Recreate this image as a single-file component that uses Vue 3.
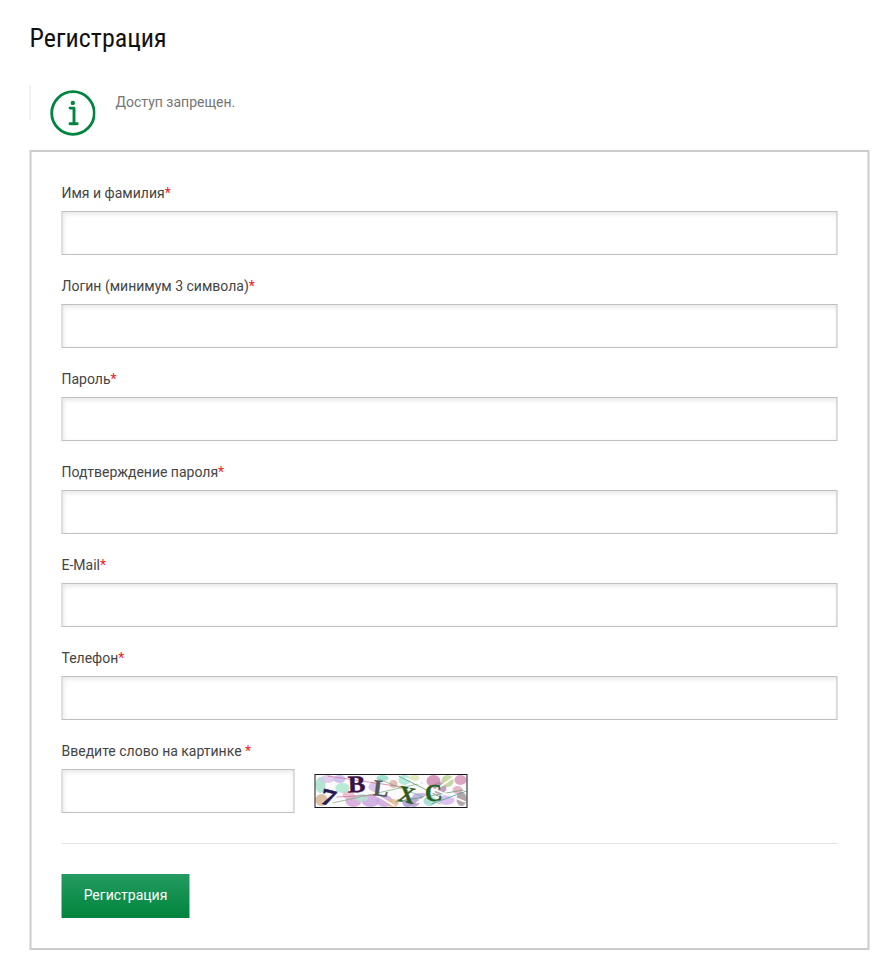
<script setup>
const fields = [
  { id: 'name', label: 'Имя и фамилия', type: 'text' },
  { id: 'login', label: 'Логин (минимум 3 символа)', type: 'text' },
  { id: 'password', label: 'Пароль', type: 'password' },
  { id: 'confirm', label: 'Подтверждение пароля', type: 'password' },
  { id: 'email', label: 'E-Mail', type: 'text' },
  { id: 'phone', label: 'Телефон', type: 'text' }
]

const blobs = [
  [6, 11, 5, 8, '#a4dfcd'], [13, 5, 7, 4, '#d8c4e8'], [7, 26, 6, 6, '#d6b38e'],
  [25, 5, 6, 4, '#c5b4ec'], [28, 14, 7, 5, '#a8e6cd'], [39, 27, 8, 6, '#d4a1d8'],
  [56, 27, 9, 6, '#c8a2df'], [70, 27, 8, 6, '#cba5dc'], [60, 13, 6, 5, '#d7b8e7'],
  [68, 4, 6, 3, '#8cdcc5'], [79, 10, 4, 4, '#dcb4a5'], [78, 29, 6, 4, '#e4b48e'],
  [90, 6, 6, 5, '#a5e6d6'], [99, 28, 6, 5, '#ad9bc8'], [106, 22, 8, 3, '#b8aaeb'],
  [119, 7, 7, 6, '#cd86ab'], [125, 14, 7, 6, '#b48cad'], [115, 27, 6, 5, '#98dcce'],
  [143, 16, 5, 4, '#e1a8bd'], [133, 7, 6, 6, '#b9cf8c'], [146, 6, 6, 5, '#d493b2'],
  [147, 25, 5, 7, '#a2929a'], [132, 26, 8, 5, '#d4b4ec'], [47, 24, 7, 4, '#b4dfcf'],
  [34, 21, 6, 4, '#e5b8c7'], [100, 4, 5, 3, '#d9e5ad'], [93, 29, 5, 4, '#a497d5']
]
</script>

<template>
  <main class="page">
    <h1>Регистрация</h1>
    <div class="notice">
      <svg class="info" width="46" height="46" viewBox="0 0 46 46">
        <circle cx="23.5" cy="23" r="21.3" fill="none" stroke="#008540" stroke-width="2.8" />
        <circle cx="23.3" cy="12.9" r="2.2" fill="#008540" />
        <path d="M20.5 18.1H24.5v15.6M20.5 33.8h7.2" fill="none" stroke="#008540" stroke-width="2.9" stroke-linecap="round" stroke-linejoin="round" />
      </svg>
      <p>Доступ запрещен.</p>
    </div>
    <form class="form" @submit.prevent>
      <div v-for="f in fields" :key="f.id" class="field">
        <label :for="f.id">{{ f.label }}<b>*</b></label>
        <input :id="f.id" :type="f.type">
      </div>
      <div class="field">
        <label for="captcha">Введите слово на картинке <b>*</b></label>
        <div class="captcha">
          <input id="captcha" type="text">
          <svg width="153" height="34" viewBox="0 0 153 34">
            <rect width="153" height="34" fill="#fbf9fc" />
            <ellipse v-for="(b, i) in blobs" :key="i" :cx="b[0]" :cy="b[1]" :rx="b[2]" :ry="b[3]" :fill="b[4]" opacity=".82" />
            <g fill="none">
              <path d="M13 2L88 13M22 23L64 21" stroke="#d66c9c" stroke-width=".7" />
              <path d="M18 29L108 9M64 5L126 30" stroke="#78a878" stroke-width=".7" />
              <path d="M84 2L128 24M81 28L149 16" stroke="#599563" stroke-width=".7" />
              <path d="M39 7L80 32M91 4L151 28M102 29L141 2" stroke="#fff" stroke-width="1.6" />
              <path d="M117 30L152 17" stroke="#4e9f9a" stroke-width=".8" />
            </g>
            <g class="glyphs">
              <text transform="translate(4.5 29) rotate(14) scale(1.35 1)" font-size="23" fill="#241a55" stroke="#241a55">7</text>
              <text transform="translate(33.5 18.5) rotate(-2) scale(1.1 1)" font-size="24" fill="#3a1146" stroke="#3a1146">B</text>
              <text transform="translate(58 21) rotate(7)" font-size="23" fill="#4e5a5c" stroke="#4e5a5c">L</text>
              <text transform="translate(82.5 26.5) rotate(12)" font-size="23" fill="#2c5a18" stroke="#2c5a18">X</text>
              <text transform="translate(111 27.5) rotate(-4)" font-size="24" fill="#246021" stroke="#246021">C</text>
            </g>
            <rect x=".5" y=".5" width="152" height="33" fill="none" stroke="#181818" />
          </svg>
        </div>
      </div>
      <div class="actions">
        <button type="submit">Регистрация</button>
      </div>
    </form>
  </main>
</template>

<style>
body {
  margin: 0;
  background: #fff;
}
</style>

<style scoped>
.page {
  width: 840px;
  padding: 20px 0 26px 30px;
  transform: translateX(-.5px);
  font: 14px/20px Roboto, "Liberation Sans", sans-serif;
  color: #444;
}
h1 {
  width: max-content;
  height: 35px;
  margin: 0;
  padding-top: 1px;
  font: 400 26px/35px "Roboto Condensed", Roboto, sans-serif;
  font-stretch: 75%;
  color: #111;
}
.notice {
  display: flex;
  align-items: flex-start;
  height: 35px;
  margin: 29px 0 30px;
  border-left: 1px solid #e6e6e6;
  box-sizing: border-box;
  color: #757575;
}
.info {
  flex: none;
  margin: 5px 0 0 19px;
}
.notice p {
  margin: 7px 0 0 20px;
}
.form {
  box-sizing: border-box;
  height: 800px;
  padding: 30px;
  border: 2px solid #ccc;
}
.field {
  margin-bottom: 20px;
}
.field:nth-child(7) {
  margin-bottom: 30px;
}
label {
  display: block;
  height: 20px;
  padding-top: 1px;
  margin-bottom: 8px;
}
b {
  font-weight: 400;
  color: #ed1c24;
}
input {
  display: block;
  box-sizing: border-box;
  width: 100%;
  height: 44px;
  padding: 0 12px;
  border: 1px solid #c0c0c0;
  border-radius: 0;
  background: #fff;
  box-shadow: inset 1px 2px 5px rgba(0, 0, 0, .1);
}
.captcha {
  display: flex;
  align-items: center;
  gap: 20px;
}
.captcha input {
  width: 233px;
}
.captcha svg {
  flex: none;
  overflow: visible;
}
.glyphs {
  font-family: "Liberation Serif", serif;
  font-weight: 700;
  stroke-width: .4px;
}
.actions {
  padding-top: 30px;
  border-top: 1px solid #e3e6e8;
}
button {
  display: block;
  width: 128px;
  height: 44px;
  padding: 0 0 2px;
  border: 0;
  background: linear-gradient(#249b60, #00843d);
  color: #fff;
  font: 14px/20px Roboto, sans-serif;
}
</style>
